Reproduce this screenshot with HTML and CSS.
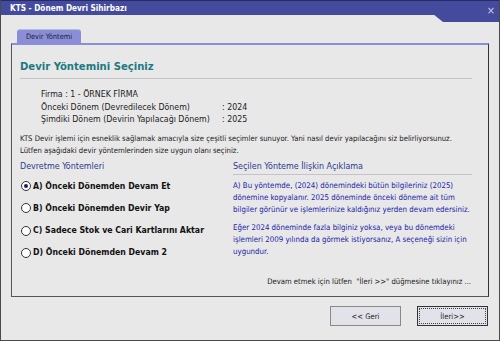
FILE: index.html
```html
<!DOCTYPE html>
<html lang="tr">
<head>
<meta charset="utf-8">
<link rel="stylesheet" href="styles.css">
</head>
<body>
<div class="window">
  <div class="titlebar">
    <span class="title">KTS - Dönem Devri Sihirbazı</span>
    <span class="close">×</span>
  </div>
  <div class="content">
    <div class="tabs"><div class="tab">Devir Yöntemi</div></div>
    <div class="panel">
      <h1 class="heading">Devir Yöntemini Seçiniz</h1>
      <div class="info">
        <div class="info-row"><span>Firma : 1 - ÖRNEK FİRMA</span></div>
        <div class="info-row"><span>Önceki Dönem (Devredilecek Dönem)</span><span>: 2024</span></div>
        <div class="info-row"><span>Şimdiki Dönem (Devirin Yapılacağı Dönem)</span><span>: 2025</span></div>
      </div>
      <p class="intro">KTS Devir işlemi için esneklik sağlamak amacıyla size çeşitli seçimler sunuyor. Yani nasıl devir yapılacağını siz belirliyorsunuz.<br>Lütfen aşağıdaki devir yöntemlerinden size uygun olanı seçiniz.</p>
      <div class="columns">
        <div class="col-left">
          <div class="section-title">Devretme Yöntemleri</div>
          <div class="options">
            <label class="option"><span class="radio checked"></span>A) Önceki Dönemden Devam Et</label>
            <label class="option"><span class="radio"></span>B) Önceki Dönemden Devir Yap</label>
            <label class="option"><span class="radio"></span>C) Sadece Stok ve Cari Kartlarını Aktar</label>
            <label class="option"><span class="radio"></span>D) Önceki Dönemden Devam 2</label>
          </div>
        </div>
        <div class="col-right">
          <div class="section-title">Seçilen Yönteme İlişkin Açıklama</div>
          <div class="desc">
            <p>A) Bu yöntemde, (2024) dönemindeki bütün bilgileriniz (2025) dönemine kopyalanır. 2025 döneminde önceki döneme ait tüm bilgiler görünür ve işlemlerinize kaldığınız yerden devam edersiniz.</p>
            <p>Eğer 2024 döneminde fazla bilginiz yoksa, veya bu dönemdeki işlemleri 2009 yılında da görmek istiyorsanız, A seçeneği sizin için uygundur.</p>
          </div>
        </div>
      </div>
      <div class="hint">Devam etmek için lütfen &nbsp;"İleri &gt;&gt;" düğmesine tıklayınız ...</div>
    </div>
    <div class="buttons">
      <button class="btn">&lt;&lt; Geri</button>
      <button class="btn primary"><span>İleri&gt;&gt;</span></button>
    </div>
  </div>
</div>
</body>
</html>
```
FILE: styles.css
```css
* { box-sizing: border-box; }
html, body { margin: 0; padding: 0; background: #e8e8e8; }
body { font-family: "DejaVu Sans Condensed", "Liberation Sans", Arial, sans-serif; color: #1a1a1a; }

.window {
  width: 500px;
  height: 341px;
  border: 1px solid #4a4a4a;
  border-top: none;
  background: #e8e8e8;
  position: relative;
  display: flex;
  flex-direction: column;
}

.titlebar {
  height: 15px;
  background: #444b9d;
  border-top: 1px solid #262a66;
  display: flex;
  align-items: center;
  justify-content: space-between;
  padding-left: 9px;
  position: relative;
}
.titlebar::after {
  content: "";
  position: absolute;
  right: 0;
  top: 13px;
  width: 66px;
  height: 8px;
  background: #444b9d;
  clip-path: polygon(0 0, 100% 0, 100% 100%, 10px 100%);
}
.title {
  color: #fff;
  font-weight: bold;
  font-size: 8.2px;
}
.close {
  color: #c8cae8;
  font-size: 11px;
  line-height: 1;
  margin-right: 4px;
  position: relative;
  top: 2px;
  z-index: 1;
}

.content {
  flex: 1;
  display: flex;
  flex-direction: column;
  padding-top: 14px;
}
.tabs {
  display: flex;
  padding-left: 16px;
}
.tab {
  width: 64px;
  height: 14px;
  background: #8a8ed6;
  border-top: 1px solid #b8bbea;
  border-radius: 3px 3px 0 0;
  font-size: 7.4px;
  line-height: 13px;
  text-align: center;
  color: #1e1e3a;
}
.panel {
  margin-left: 10px;
  width: 478px;
  height: 254px;
  border-top: 2px solid #8a8ed6;
  border-left: 1px solid #555;
  border-right: 1px solid #333;
  border-bottom: 1px solid #555;
  padding: 15px 16px 0 8px;
  display: flex;
  flex-direction: column;
}
.heading {
  margin: 0;
  font-size: 11.2px;
  line-height: 14px;
  font-weight: bold;
  color: #1d7a80;
  padding-bottom: 4px;
  border-bottom: 1px solid #c4c4c4;
}
.info {
  margin-top: 9px;
  padding-left: 21px;
  font-size: 8.75px;
  line-height: 12.5px;
  color: #222;
}
.info-row {
  display: grid;
  grid-template-columns: 181px auto;
}
.intro {
  margin: 7px 0 0;
  font-size: 7.65px;
  line-height: 12px;
  color: #222;
}
.columns {
  display: flex;
  margin-top: 3px;
}
.col-left { width: 213px; }
.col-right { flex: 1; }
.section-title {
  font-size: 8.9px;
  line-height: 13px;
  color: #2b3a8f;
  padding-bottom: 1px;
  border-bottom: 1px solid #c4c4c4;
}
.col-left .section-title { border-bottom: none; }
.options {
  display: flex;
  flex-direction: column;
  gap: 11.3px;
  margin-top: 7px;
}
.option {
  display: flex;
  align-items: center;
  font-size: 8.7px;
  font-weight: bold;
  line-height: 11px;
  color: #111;
}
.radio {
  width: 10px;
  height: 10px;
  border: 1px solid #333;
  border-radius: 50%;
  background: #fff;
  margin-left: 1px;
  margin-right: 2px;
  position: relative;
}
.radio.checked::after {
  content: "";
  position: absolute;
  left: 2px;
  top: 2px;
  width: 4px;
  height: 4px;
  border-radius: 50%;
  background: #1a1a7a;
}
.desc {
  margin-top: 5px;
  font-size: 7.85px;
  line-height: 12px;
  color: #2224a8;
}
.desc p { margin: 0 0 6px; }
.hint {
  margin-top: auto;
  margin-bottom: 8px;
  text-align: right;
  font-size: 7.65px;
  line-height: 12px;
  color: #222;
  padding-right: 1px;
}
.buttons {
  display: flex;
  justify-content: flex-end;
  gap: 16px;
  padding-right: 11px;
  margin-top: 9px;
}
.btn {
  width: 71px;
  height: 20px;
  background: #e2e2ea;
  border: 1px solid #8a8a8a;
  font-family: "DejaVu Sans Condensed", "Liberation Sans", Arial, sans-serif;
  font-size: 7.6px;
  color: #222;
  padding: 0;
}
.btn.primary {
  border: 1px solid #333;
  padding: 1px;
}
.btn.primary span {
  display: flex;
  align-items: center;
  justify-content: center;
  height: 100%;
  border: 1px dotted #444;
}
```
